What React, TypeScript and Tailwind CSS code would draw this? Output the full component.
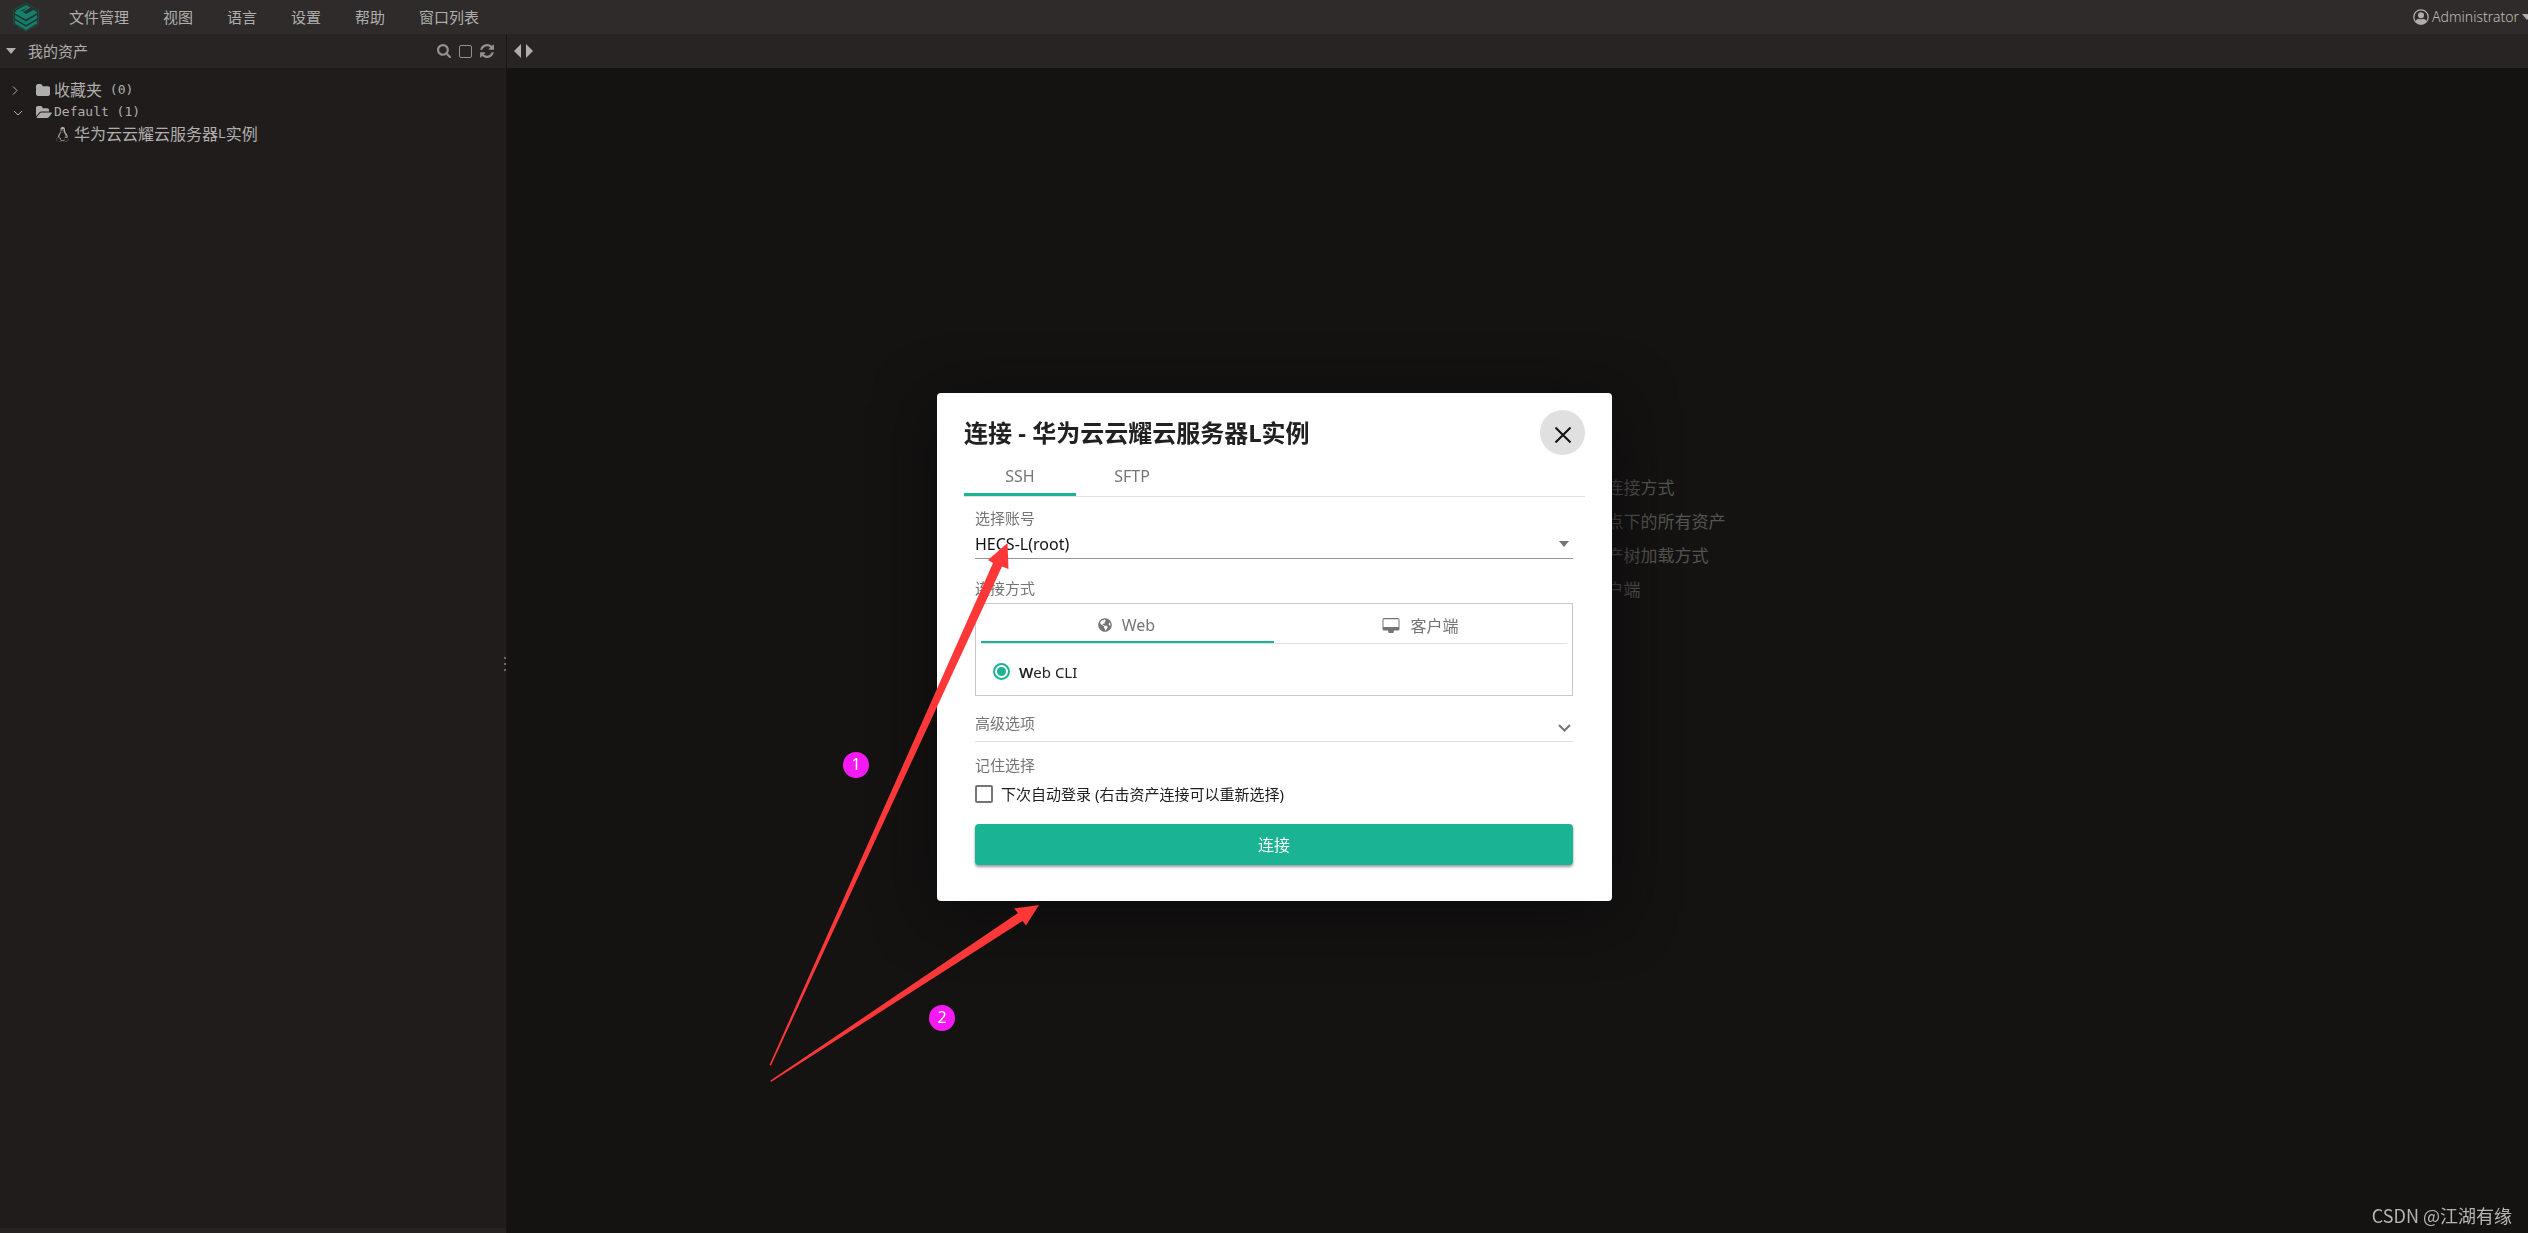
import { useState } from 'react';
import { FaGlobeAmericas, FaLinux } from 'react-icons/fa';

const menuItems = ['文件管理', '视图', '语言', '设置', '帮助', '窗口列表'];
const tips = ['连接方式', '点下的所有资产', '产树加载方式', '户端'];

function Logo() {
  return (
    <svg width="28" height="30" viewBox="0 0 28 30" fill="none">
      <path d="M14 1 26.500 8v14L14 29 1.500 22V8z" fill="#243331" stroke="#1f4a41" />
      <path d="M3 9 14 3l4.500 2.500L11 10l3 2 7.500-4L25 10v1l-11 6.500L3 11.500V10l8-1 4-3.500L6 10.500z" fill="#12806a" />
      <path d="M3 13 14 19.500 25 13v3.500L14 23 3 16.500z" fill="#12806a" />
      <path d="M3 18.200 14 24.700l11-6.500v3.300L14 28 3 21.500z" fill="#12806a" />
    </svg>
  );
}

function SearchIcon() {
  return (
    <svg width="14" height="14" viewBox="64 128 1664 1664" fill="currentColor">
      <path d="M1216 832q0-185-131.500-316.500t-316.500-131.500-316.500 131.500-131.500 316.500 131.500 316.500 316.500 131.500 316.500-131.500 131.500-316.500zm512 832q0 52-38 90t-90 38q-54 0-90-38l-343-342q-179 124-399 124-143 0-273.500-55.500t-225-150-150-225-55.500-273.500 55.500-273.500 150-225 225-150 273.500-55.500 273.500 55.500 225 150 150 225 55.500 273.500q0 220-124 399l343 343q37 37 37 90z" />
    </svg>
  );
}

function RefreshIcon() {
  return (
    <svg width="14" height="14" viewBox="0 0 1536 1536" fill="currentColor">
      <path d="M1511 928q0 5-1 7-64 268-268 434.500t-478 166.500q-146 0-282.500-55t-243.500-157l-129 129q-19 19-45 19t-45-19-19-45v-448q0-26 19-45t45-19h448q26 0 45 19t19 45-19 45l-137 137q71 66 161 102t187 36q134 0 250-65t186-179q11-17 53-117 8-23 30-23h192q13 0 22.500 9.500t9.500 22.500zm25-800v448q0 26-19 45t-45 19h-448q-26 0-45-19t-19-45 19-45l138-138q-148-137-349-137-134 0-250 65t-186 179q-11 17-53 117-8 23-30 23h-199q-13 0-22.500-9.500t-9.500-22.500v-7q65-268 270-434.500t480-166.500q146 0 284 55.500t245 156.500l130-129q19-19 45-19t45 19 19 45z" />
    </svg>
  );
}

function FolderIcon() {
  return (
    <svg width="14" height="12" viewBox="64 128 1664 1408" fill="currentColor">
      <path d="M1728 608v704q0 92-66 158t-158 66h-1216q-92 0-158-66t-66-158v-960q0-92 66-158t158-66h320q92 0 158 66t66 158v32h672q92 0 158 66t66 158z" />
    </svg>
  );
}

function FolderOpenIcon() {
  return (
    <svg width="16" height="12" viewBox="0 128 1880 1408" fill="currentColor">
      <path d="M1879 952q0 31-31 66l-336 396q-43 51-120.500 86.500t-143.500 35.500h-1088q-34 0-60.500-13t-26.500-43q0-31 31-66l336-396q43-51 120.500-86.500t143.500-35.500h1088q34 0 60.500 13t26.500 43zm-343-344v160h-832q-94 0-197 47.500t-164 119.500l-337 396-5 6q0-4-.5-12.500t-.5-12.500v-960q0-92 66-158t158-66h320q92 0 158 66t66 158v32h544q92 0 158 66t66 158z" />
    </svg>
  );
}

function UserIcon() {
  return (
    <svg width="16" height="16" viewBox="0 0 16 16">
      <circle cx="8" cy="8" r="7.200" fill="none" stroke="currentColor" strokeWidth="1.300" />
      <circle cx="8" cy="6.200" r="3" fill="currentColor" />
      <path d="M2 12.500q1.500-2.500 4-2.800 2 1.300 4 0 2.500.3 4 2.800-2.500 3-6 3t-6-3z" fill="currentColor" />
    </svg>
  );
}

function DesktopIcon() {
  return (
    <svg width="18" height="15" viewBox="0 0 18 15" fill="currentColor">
      <path d="M2 0h14q1.500 0 1.500 1.500v9.500q0 1.500-1.500 1.500h-4V13.500h-.5V15h-5v-1.500H6v-1H2Q.5 12.500.5 11V1.500Q.5 0 2 0zM1.500 1.200v7.800h15V1.200z" />
    </svg>
  );
}

function CaretDown() {
  return (
    <svg width="10" height="6" viewBox="0 0 10 6" className="shrink-0" fill="currentColor">
      <path d="M0 0h10L5 6z" />
    </svg>
  );
}

function Header() {
  return (
    <header className="flex h-[34px] shrink-0 items-center justify-between overflow-hidden bg-[#2f2b2a] pl-3">
      <div className="flex items-center gap-[29px]">
        <Logo />
        <nav className="flex items-center gap-[34px]">
          {menuItems.map((item) => (
            <button key={item} type="button">
              {item}
            </button>
          ))}
        </nav>
      </div>
      <button type="button" className="-mr-1 flex items-center gap-[3px]">
        <UserIcon />
        <span className="text-sm font-light text-[#c0bebd]">Administrator</span>
        <CaretDown />
      </button>
    </header>
  );
}

function AssetTree() {
  return (
    <aside className="flex w-[507px] shrink-0 flex-col border-r border-[#171514] bg-[#201c1b]">
      <div className="flex h-[34px] items-center justify-between bg-[#272423] pr-3 pl-1.5">
        <button type="button" className="flex items-center gap-3">
          <CaretDown />
          我的资产
        </button>
        <div className="flex items-center gap-2 text-[#929090]">
          <button type="button" aria-label="搜索">
            <SearchIcon />
          </button>
          <button type="button" aria-label="多选" className="size-[13px] rounded-xs border border-[#929090]" />
          <button type="button" aria-label="刷新">
            <RefreshIcon />
          </button>
        </div>
      </div>

      <div className="flex flex-1 items-center">
        <ul className="flex-1 self-start pt-[11px] text-base leading-5">
          <li className="flex h-[22px] items-center pl-3">
            <svg width="24" height="9" viewBox="0 0 24 9" fill="none" stroke="currentColor">
              <path d="m1 .5 4 4-4 4" />
            </svg>
            <FolderIcon />
            <span className="pl-1">收藏夹</span>
            <span className="font-[DejaVu_Sans_Mono] text-[13px] whitespace-pre"> (0)</span>
          </li>
          <li className="flex h-[22px] items-center pl-3">
            <svg width="24" height="9" viewBox="0 0 24 9" fill="none" stroke="currentColor">
              <path d="m2 3 4 4 4-4" />
            </svg>
            <FolderOpenIcon />
            <span className="pl-0.5 font-[DejaVu_Sans_Mono] text-[13px]">Default (1)</span>
          </li>
          <li className="flex h-[22px] items-center pl-[55px]">
            <FaLinux className="size-[15px]" />
            <span className="pl-1">华为云云耀云服务器</span>
            <span className="font-[DejaVu_Sans_Mono] text-[13px]">L</span>
            <span>实例</span>
          </li>
        </ul>
        <div className="flex flex-col gap-1 pt-8">
          <span className="size-0.5 bg-[#6b6867]" />
          <span className="size-0.5 bg-[#6b6867]" />
          <span className="size-0.5 bg-[#6b6867]" />
        </div>
      </div>
      <div className="h-[5px] bg-[#262221]" />
    </aside>
  );
}

function Workspace() {
  return (
    <main className="flex flex-1 flex-col">
      <div className="flex h-[34px] items-center gap-[5px] bg-[#272423] pl-[7px]">
        <button type="button" aria-label="上一个">
          <svg width="7" height="14" viewBox="0 0 7 14" fill="currentColor">
            <path d="M7 0v14L0 7z" />
          </svg>
        </button>
        <button type="button" aria-label="下一个">
          <svg width="7" height="14" viewBox="0 0 7 14" fill="currentColor">
            <path d="M0 0v14l7-7z" />
          </svg>
        </button>
      </div>
      <div className="grid flex-1 grid-cols-2">
        <ul className="col-start-2 pt-[403px] pl-[89px] text-[17px] leading-[34px] text-[#555453]">
          {tips.map((tip) => (
            <li key={tip}>{tip}</li>
          ))}
        </ul>
      </div>
    </main>
  );
}

function Annotations() {
  return (
    <>
      <svg
        width="280"
        height="550"
        viewBox="768 540 280 550"
        fill="#fe3838"
        className="pointer-events-none absolute top-[147px] -left-[169px]"
      >
        <path d="M769.500 1065 993 563l-5-3 19.500-17 1 26-6.500-2.500L771 1065.500z" />
        <path d="M770.500 1080.500 1018 913l-4-4.500 25-3.500-13 20.500-3.500-4.500L771 1082z" />
      </svg>
      <span className="absolute top-[359px] -left-[94px] size-[26px] rounded-full bg-[#f51af5] text-center text-base leading-6 text-white">
        1
      </span>
      <span className="absolute top-[612px] -left-2 size-[26px] rounded-full bg-[#f51af5] text-center text-base leading-6 text-white">
        2
      </span>
    </>
  );
}

function ConnectDialog() {
  const [protocol, setProtocol] = useState('SSH');
  const [autoLogin, setAutoLogin] = useState(false);

  return (
    <div className="fixed inset-0 flex items-center justify-center pt-[61px] pl-[21px]">
      <div
        role="dialog"
        aria-labelledby="dialog-title"
        className="relative w-[675px] rounded-sm bg-white px-[27px] pt-[17px] pb-9 text-[#212121] shadow-[0_11px_60px_#0c0a0d]"
      >
        <div className="flex items-center justify-between">
          <h2 id="dialog-title" className="text-2xl font-bold">
            连接 - 华为云云耀云服务器L实例
          </h2>
          <button
            type="button"
            aria-label="关闭"
            className="flex size-[45px] items-center justify-center rounded-full bg-[#e0e0e0] pt-1"
          >
            <svg width="16" height="16" viewBox="0 0 16 16" stroke="#111" strokeWidth="2">
              <path d="m.5.5 15 15m0-15-15 15" />
            </svg>
          </button>
        </div>

        <div role="tablist" className="flex border-b border-[#e0e0e0] text-base text-[#757575]">
          {['SSH', 'SFTP'].map((name) => (
            <button
              key={name}
              type="button"
              role="tab"
              aria-selected={protocol === name}
              onClick={() => setProtocol(name)}
              className="h-[41px] w-28 border-b-3 border-transparent pt-1 aria-selected:border-[#1ab394]"
            >
              {name}
            </button>
          ))}
        </div>

        <form className="pt-2.5 pr-3 pl-[11px]" onSubmit={(e) => e.preventDefault()}>
          <label htmlFor="account" className="block h-6 text-[#757575]">
            选择账号
          </label>
          <div className="relative border-b border-[#949494]">
            <select id="account" className="h-[27px] w-full appearance-none pb-0.5 text-base text-[#111]">
              <option>HECS-L(root)</option>
            </select>
            <span className="pointer-events-none absolute top-[10px] right-1 text-[#757575]">
              <CaretDown />
            </span>
          </div>

          <p className="pt-[18px] text-[#757575]">连接方式</p>
          <div className="mt-1 border border-[#c8c8c8] px-[5px]">
            <div role="tablist" className="grid grid-cols-2 border-b border-[#e0e0e0] text-base text-[#757575]">
              <button
                type="button"
                role="tab"
                aria-selected="true"
                className="flex h-[39px] items-center justify-center gap-2.5 border-b-2 border-[#1ab394] pt-1 pr-0.5"
              >
                <FaGlobeAmericas className="size-[14px]" />
                Web
              </button>
              <button type="button" role="tab" aria-selected="false" className="flex h-[39px] items-center justify-center gap-2.5 pt-1">
                <DesktopIcon />
                客户端
              </button>
            </div>
            <label className="flex h-[51px] items-center gap-[9px] pt-1 pl-3">
              <input
                type="radio"
                name="method"
                defaultChecked
                className="size-[17px] appearance-none rounded-full border-2 border-[#1ab394] bg-[#1ab394] bg-clip-content p-0.5"
              />
              <span>
                <b className="font-semibold">W</b>eb CLI
              </span>
            </label>
          </div>

          <button
            type="button"
            className="mt-4 flex h-[30px] w-full items-start justify-between border-b border-[#e0e0e0] pr-0.5 text-[#757575]"
          >
            高级选项
            <svg width="13" height="24" viewBox="0 0 13 24" fill="none" stroke="currentColor" strokeWidth="2">
              <path d="m1 13 5.500 5.500L12 13" />
            </svg>
          </button>

          <p className="pt-3 text-[#757575]">记住选择</p>
          <label className="mt-1.5 flex h-6 items-center gap-2">
            <input
              type="checkbox"
              checked={autoLogin}
              onChange={(e) => setAutoLogin(e.target.checked)}
              className="size-[18px] appearance-none rounded-xs border-2 border-[#757575] checked:bg-[#1ab394]"
            />
            下次自动登录 (右击资产连接可以重新选择)
          </label>

          <button
            type="submit"
            className="mt-[18px] h-[41px] w-full rounded-sm bg-[#1ab394] text-base text-white shadow-[0_2px_3px_#0006]"
          >
            连接
          </button>
        </form>
        <Annotations />
      </div>
    </div>
  );
}

export default function App() {
  return (
    <div className="flex min-h-screen flex-col bg-[#141311] font-[Noto_Sans,Noto_Sans_CJK_SC,sans-serif] text-[15px] leading-[22px] text-[#b0aead]">
      <Header />
      <div className="flex flex-1">
        <AssetTree />
        <Workspace />
      </div>
      <ConnectDialog />
      <p className="fixed right-4 bottom-1 font-[Noto_Sans_CJK_SC,sans-serif] text-lg text-[#b4b4b4]">
        CSDN @江湖有缘
      </p>
    </div>
  );
}
